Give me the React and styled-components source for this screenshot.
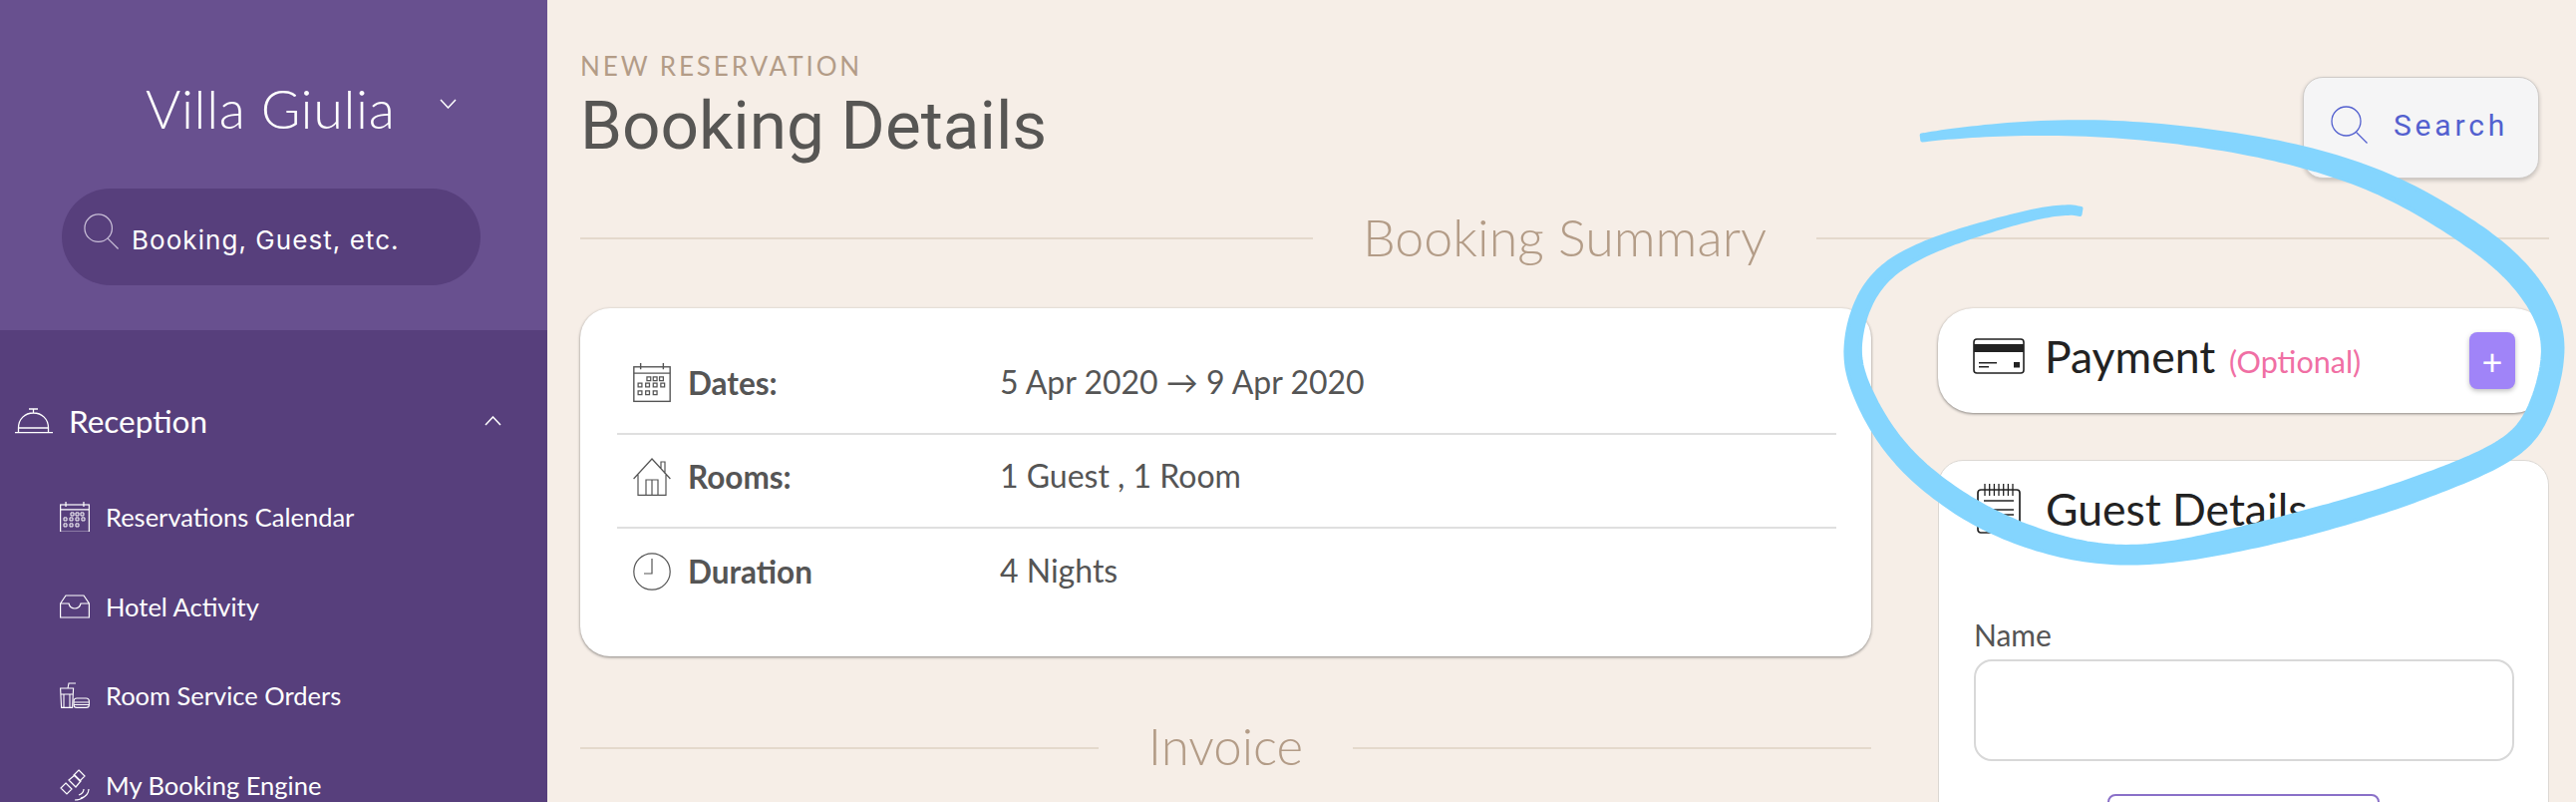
import React from 'react'
import styled, { createGlobalStyle } from 'styled-components'

const GlobalStyle = createGlobalStyle`
  html, body {
    margin: 0;
    padding: 0;
    background: #f6eee7;
  }
  * {
    box-sizing: border-box;
  }
`

const Page = styled.div`
  position: relative;
  display: flex;
  width: 2584px;
  height: 804px;
  overflow: hidden;
  background: #f6eee7;
  font-family: 'Lato', 'Liberation Sans', sans-serif;
`

const Sidebar = styled.aside`
  flex: 0 0 549px;
  background: #573f7c;
  color: #fff;
`

const SideTop = styled.div`
  height: 331px;
  padding: 72px 67px 0 62px;
  background: #68508f;
`

const HotelRow = styled.div`
  display: flex;
  align-items: center;
  height: 72px;
  padding: 0 24px 0 84px;
  font-size: 54px;
  font-weight: 300;
  letter-spacing: 0.6px;
`

const HotelName = styled.span`
  flex: 1;
`

const HotelChevron = styled.span`
  display: flex;
  margin-bottom: 8px;
`

const SideSearch = styled.div`
  display: flex;
  align-items: center;
  gap: 12px;
  width: 420px;
  height: 97px;
  margin-top: 45px;
  padding: 0 22px;
  border-radius: 49px;
  background: #573f7c;
  font-family: 'Inter', 'Liberation Sans', sans-serif;
  font-size: 26px;
  letter-spacing: 1.05px;
`

const SideSearchText = styled.span`
  padding-top: 6px;
`

const SideSearchIcon = styled.svg`
  width: 36px;
  height: 36px;
  margin-bottom: 12px;
`

const Nav = styled.nav`
  padding: 69px 46px 0 15px;
`

const NavHead = styled.div`
  display: flex;
  align-items: center;
  height: 44px;
  gap: 16px;
  font-size: 31.5px;
`

const NavHeadLabel = styled.span`
  flex: 1;
`

const SubList = styled.ul`
  display: flex;
  flex-direction: column;
  gap: 49.6px;
  margin: 54px 0 0;
  padding: 0 0 0 45px;
  list-style: none;
`

const SubItem = styled.li`
  display: flex;
  align-items: center;
  gap: 16px;
  height: 40px;
  font-size: 25.5px;
  white-space: nowrap;
`

const Main = styled.main`
  flex: 1;
  padding: 51px 27px 0 33px;
`

const Header = styled.header`
  display: flex;
  justify-content: space-between;
  align-items: flex-start;
`

const Eyebrow = styled.div`
  height: 30px;
  line-height: 30px;
  font-size: 26px;
  letter-spacing: 2.9px;
  color: #b39c87;
`

const Title = styled.h1`
  margin: 6px 0 0;
  height: 78px;
  line-height: 78px;
  font-family: 'Roboto', 'Liberation Sans', sans-serif;
  font-size: 67.5px;
  font-weight: 400;
  color: #575654;
`

const SearchButton = styled.button`
  display: flex;
  align-items: center;
  gap: 25px;
  width: 237px;
  height: 102px;
  margin: 26px 10px 0 0;
  padding: 0 0 6px 27px;
  border: 1px solid #cfcbc8;
  border-radius: 20px;
  background: #f5f5f6;
  box-shadow: 0 2px 4px rgba(0, 0, 0, 0.2);
  font-family: 'Roboto', 'Liberation Sans', sans-serif;
  font-size: 30px;
  letter-spacing: 3.8px;
  color: #5360cf;
`

const SectionHeading = styled.div`
  display: flex;
  align-items: center;
  gap: 50px;
  height: 60px;
  margin-top: ${p => p.$top}px;
  font-size: ${p => p.$size}px;
  font-weight: 300;
  color: #b39c87;

  &::before,
  &::after {
    content: '';
    flex: 1;
    height: 2px;
    background: #e4d9cc;
  }
`

const HeadingText = styled.span`
  padding-bottom: 5px;
`

const Columns = styled.div`
  display: grid;
  grid-template-columns: 1295px 613px;
  column-gap: 67px;
  margin-top: 40px;
`

const SummaryCard = styled.section`
  height: 349px;
  padding: 33px 35px 0 37px;
  border-radius: 30px;
  background: #fff;
  box-shadow: 0 1px 3px rgba(0, 0, 0, 0.45);
`

const SummaryRow = styled.div`
  display: grid;
  grid-template-columns: 368px 1fr;
  align-items: center;
  height: 94px;
  padding: 0 0 8px 16px;
  border-bottom: ${p => (p.$last ? 'none' : '2px solid #dfdfdf')};
  font-size: 32px;
  color: #555;
`

const SummaryLabel = styled.div`
  display: flex;
  align-items: center;
  gap: 17px;
  font-size: 31.5px;
  font-weight: 700;
`

const SummaryValue = styled.div`
  padding-bottom: 4px;
`

const RightCol = styled.div`
  display: flex;
  flex-direction: column;
  gap: 47px;
`

const PaymentCard = styled.section`
  display: flex;
  align-items: center;
  height: 105px;
  padding: 0 34px 0 35px;
  border-radius: 35px;
  background: #fff;
  box-shadow: 0 1px 3px rgba(0, 0, 0, 0.45);
`

const CardTitle = styled.div`
  display: flex;
  align-items: center;
  gap: ${p => p.$gap}px;
  flex: 1;
  padding-left: ${p => p.$inset || 0}px;
  padding-bottom: ${p => p.$pad || 0}px;
  font-size: 44.5px;
  color: #222;
`

const Optional = styled.span`
  margin-left: 14px;
  font-size: 30.5px;
  color: #f06fa4;
`

const PlusButton = styled.button`
  width: 46px;
  height: 57px;
  padding: 0;
  border: none;
  border-radius: 8px;
  background: #a084f8;
  box-shadow: 0 2px 5px rgba(0, 0, 0, 0.25);
  font-family: 'Lato', 'Liberation Sans', sans-serif;
  font-size: 36px;
  color: #fff;
`

const GuestCard = styled.section`
  height: 500px;
  padding: 21px 35px 0;
  border: 1px solid #dcd8d3;
  border-radius: 25px;
  background: #fff;
`

const FieldLabel = styled.label`
  display: block;
  height: 40px;
  margin-top: 80px;
  line-height: 40px;
  font-size: 30px;
  color: #555;
`

const TextInput = styled.input`
  display: block;
  width: 542px;
  height: 102px;
  margin-top: 5px;
  border: 2px solid #d8d8d8;
  border-radius: 18px;
  background: #fff;
`

const AddGuestButton = styled.button`
  display: block;
  width: 273px;
  height: 70px;
  margin: 33px auto 0;
  border: 2px solid #8a70c8;
  border-radius: 8px;
  background: #fff;
`

const Scribble = styled.svg`
  position: absolute;
  top: 0;
  left: 0;
  width: 2584px;
  height: 804px;
  pointer-events: none;
`

// x, y, stroke width along the hand drawn circle
const scribblePoints = [
  [1928, 138, 9], [1987, 131, 12], [2092, 127, 17], [2205, 137, 19], [2310, 156, 22],
  [2400, 187, 24], [2467, 227, 26], [2517, 263, 26], [2555, 313, 25], [2562, 360, 23],
  [2547, 413, 24], [2523, 447, 24], [2467, 474, 24], [2400, 499, 25], [2333, 519, 26],
  [2267, 536, 25], [2200, 550, 23], [2133, 558, 20], [2063, 548, 22], [1997, 523, 24],
  [1947, 492, 23], [1897, 447, 22], [1865, 387, 20], [1857, 347, 18], [1873, 290, 18],
  [1913, 257, 16], [1963, 237, 14], [2013, 222, 12], [2063, 210, 11], [2087, 212, 10],
]

function scribbleOutline(points) {
  const raw = []
  for (let i = 0; i < points.length - 1; i++) {
    const p0 = points[Math.max(i - 1, 0)]
    const p1 = points[i]
    const p2 = points[i + 1]
    const p3 = points[Math.min(i + 2, points.length - 1)]
    for (let s = 0; s < 12; s++) {
      const t = s / 12
      raw.push(p1.map((_, k) =>
        0.5 * (2 * p1[k] + (p2[k] - p0[k]) * t +
          (2 * p0[k] - 5 * p1[k] + 4 * p2[k] - p3[k]) * t * t +
          (3 * p1[k] - p0[k] - 3 * p2[k] + p3[k]) * t * t * t)))
    }
  }
  raw.push(points[points.length - 1])
  // moving average takes the wobble out of the hand picked points
  const samples = raw.map((p, i) => {
    const reach = Math.min(8, i, raw.length - 1 - i)
    const part = raw.slice(i - reach, i + reach + 1)
    return p.map((_, k) => part.reduce((sum, q) => sum + q[k], 0) / part.length)
  })
  const left = []
  const right = []
  samples.forEach((p, i) => {
    const a = samples[Math.max(i - 1, 0)]
    const b = samples[Math.min(i + 1, samples.length - 1)]
    const dx = b[0] - a[0]
    const dy = b[1] - a[1]
    const len = Math.hypot(dx, dy) || 1
    const half = (p[2] - 4) / 2
    left.push(`${(p[0] - dy / len * half).toFixed(1)} ${(p[1] + dx / len * half).toFixed(1)}`)
    right.unshift(`${(p[0] + dy / len * half).toFixed(1)} ${(p[1] - dx / len * half).toFixed(1)}`)
  })
  return `M${left.concat(right).join('L')}Z`
}

const stroke = { fill: 'none', stroke: 'currentColor' }

const Chevron = ({ up }) => (
  <svg width="17" height="10" viewBox="0 0 17 10" {...stroke} strokeWidth="1.5">
    <path d={up ? 'M1 9l7.5-8L16 9' : 'M1 1l7.5 8L16 1'} />
  </svg>
)

const CalendarIcon = ({ size = 30, sw = 1.2 }) => (
  <svg width={size} height={size * 1.03} viewBox="0 0 30 31" {...stroke} strokeWidth={sw}>
    <rect x="0.6" y="3" width="28.8" height="27.4" />
    <path d="M0.6 8h28.8M6 0v5M24 0v5" />
    <path d="M11 11h3v3h-3zM16 11h3v3h-3zM21 11h3v3h-3zM4 16h3v3H4zM10 16h3v3h-3zM16 16h3v3h-3zM22 16h3v3h-3zM4 22h3v3H4zM10 22h3v3h-3zM16 22h3v3h-3z" strokeWidth="1" />
  </svg>
)

const BellIcon = () => (
  <svg width="38" height="26" viewBox="0 0 38 26" {...stroke} strokeWidth="1.3">
    <path d="M14 1h9M18.5 1v4M3.5 20C3.5 11 10 5 18.5 5S33.5 11 33.5 20M3.5 20h30M3.5 20v4M33.5 20v4M0 24.6h38" />
  </svg>
)

const InboxIcon = () => (
  <svg width="30" height="24" viewBox="0 0 30 24" {...stroke} strokeWidth="1.2">
    <path d="M0.6 9L6 1h18l5.4 8v14H0.6zM0.6 9H9c1 4 3 5 6 5s5-1 6-5h8.4" />
  </svg>
)

const DrinkIcon = () => (
  <svg width="30" height="26" viewBox="0 0 30 26" {...stroke} strokeWidth="1.1">
    <path d="M0.6 6h13l-1 19.4h-11zM1 12h12M4 12v13M10 12v13M8 6l1-5h7" />
    <rect x="14" y="16" width="15.4" height="9.4" rx="3" />
    <path d="M14 20h15.4M14 22.5h15.4" />
  </svg>
)

const SatelliteIcon = () => (
  <svg width="30" height="32" viewBox="0 0 30 32" {...stroke} strokeWidth="1.2">
    <path d="M19 1l6 6-5 5-6-6zM9 11l6-5 6 6-5 6zM6 14l6 6-5 5-6-6z" />
    <path d="M29 20c0 5-4 8-8 9M24 20c0 3-2 5-5 6M15 31c7 0 14-5 14-11" />
  </svg>
)

const HouseIcon = () => (
  <svg width="38" height="38" viewBox="0 0 38 38" {...stroke} strokeWidth="1.2">
    <path d="M0.6 21L19 1l18.4 20M5 17v20.4h28V17M13 37.4V22h12v15.4M19 22v15.4M28 11V4h4v12" />
  </svg>
)

const ClockIcon = () => (
  <svg width="38" height="38" viewBox="0 0 38 38" {...stroke} strokeWidth="1.2">
    <circle cx="19" cy="19" r="18.2" />
    <path d="M19 6v15h-8" />
  </svg>
)

const CreditCardIcon = () => (
  <svg width="52" height="36" viewBox="0 0 52 36">
    <rect x="1" y="1" width="50" height="34" rx="3" fill="#fff" stroke="#222" strokeWidth="1.6" />
    <path d="M1 6h50v8H1zM6 24h18v1.6H6zM6 28h10v1.6H6zM41 24h6v5.5h-6z" fill="#222" />
  </svg>
)

const NotepadIcon = () => (
  <svg width="44" height="50" viewBox="0 0 44 50" {...stroke} strokeWidth="1.7" color="#222">
    <rect x="1" y="6" width="42" height="43" rx="3" />
    <path d="M8 0v12M12.7 0v12M17.4 0v12M22 0v12M26.7 0v12M31.4 0v12M36 0v12" strokeWidth="1.3" />
    <path d="M7 17h30M7 26h30M11 31h26M7 37h30" />
  </svg>
)

const SearchGlyph = ({ size, color, sw = 1.3 }) => (
  <svg width={size} height={size} viewBox="0 0 38 38" {...stroke} strokeWidth={sw} color={color}>
    <circle cx="15.5" cy="15.5" r="14.5" />
    <path d="M25.5 26.5l11 11" />
  </svg>
)

const subItems = [
  { label: 'Reservations Calendar', icon: <CalendarIcon /> },
  { label: 'Hotel Activity', icon: <InboxIcon /> },
  { label: 'Room Service Orders', icon: <DrinkIcon /> },
  { label: 'My Booking Engine', icon: <SatelliteIcon /> },
]

const summary = [
  { label: 'Dates:', value: '5 Apr 2020 → 9 Apr 2020', icon: <CalendarIcon size={38} sw={1.1} /> },
  { label: 'Rooms:', value: '1 Guest , 1 Room', icon: <HouseIcon /> },
  { label: 'Duration', value: '4 Nights', icon: <ClockIcon /> },
]

export default function App() {
  return (
    <Page>
      <GlobalStyle />
      <Sidebar>
        <SideTop>
          <HotelRow>
            <HotelName>Villa Giulia</HotelName>
            <HotelChevron>
              <Chevron />
            </HotelChevron>
          </HotelRow>
          <SideSearch>
            <SideSearchIcon viewBox="0 0 38 38" {...stroke} strokeWidth="1.3" color="#c9bfd8">
              <circle cx="15.5" cy="15.5" r="14.5" />
              <path d="M25.5 26.5l11 11" />
            </SideSearchIcon>
            <SideSearchText>Booking, Guest, etc.</SideSearchText>
          </SideSearch>
        </SideTop>
        <Nav>
          <NavHead>
            <BellIcon />
            <NavHeadLabel>Reception</NavHeadLabel>
            <Chevron up />
          </NavHead>
          <SubList>
            {subItems.map(item => (
              <SubItem key={item.label}>
                {item.icon}
                {item.label}
              </SubItem>
            ))}
          </SubList>
        </Nav>
      </Sidebar>
      <Main>
        <Header>
          <div>
            <Eyebrow>NEW RESERVATION</Eyebrow>
            <Title>Booking Details</Title>
          </div>
          <SearchButton>
            <SearchGlyph size={38} color="#5360cf" />
            Search
          </SearchButton>
        </Header>
        <SectionHeading $top={30} $size={52}>
          <HeadingText>Booking Summary</HeadingText>
        </SectionHeading>
        <Columns>
          <div>
            <SummaryCard>
              {summary.map((row, i) => (
                <SummaryRow key={row.label} $last={i === summary.length - 1}>
                  <SummaryLabel>
                    {row.icon}
                    {row.label}
                  </SummaryLabel>
                  <SummaryValue>{row.value}</SummaryValue>
                </SummaryRow>
              ))}
            </SummaryCard>
            <SectionHeading $top={62} $size={51}>
              <HeadingText>Invoice</HeadingText>
            </SectionHeading>
          </div>
          <RightCol>
            <PaymentCard>
              <CardTitle $pad={10} $gap={20}>
                <CreditCardIcon />
                <span>
                  Payment<Optional>(Optional)</Optional>
                </span>
              </CardTitle>
              <PlusButton>+</PlusButton>
            </PaymentCard>
            <GuestCard>
              <CardTitle $gap={25} $inset={3}>
                <NotepadIcon />
                Guest Details
              </CardTitle>
              <FieldLabel>Name</FieldLabel>
              <TextInput />
              <AddGuestButton />
            </GuestCard>
          </RightCol>
        </Columns>
      </Main>
      <Scribble viewBox="0 0 2584 804">
        <path
          d={scribbleOutline(scribblePoints)}
          fill="#84d5fe"
          stroke="#84d5fe"
          strokeWidth="4"
          strokeLinejoin="round"
        />
      </Scribble>
    </Page>
  )
}
